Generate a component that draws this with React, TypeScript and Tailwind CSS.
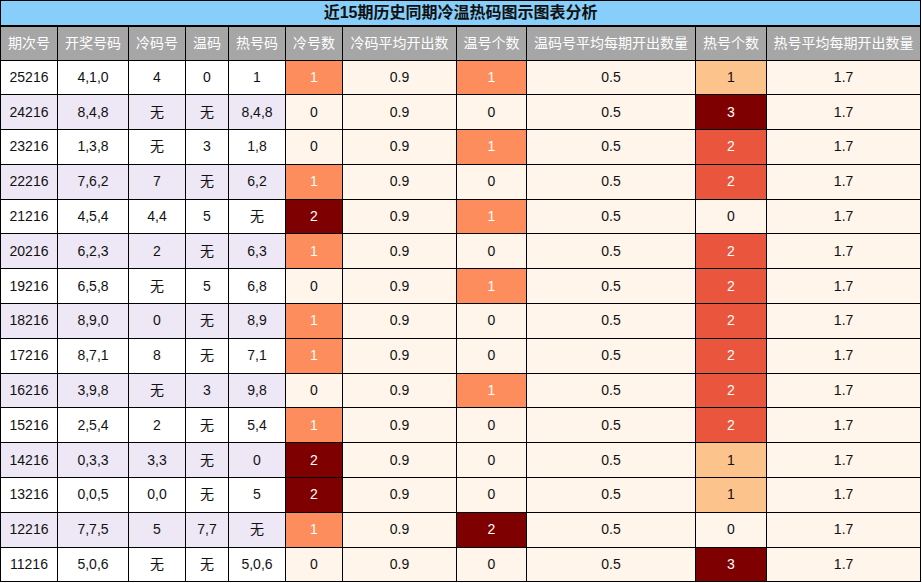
const headers = [
  "期次号",
  "开奖号码",
  "冷码号",
  "温码",
  "热号码",
  "冷号数",
  "冷码平均开出数",
  "温号个数",
  "温码号平均每期开出数量",
  "热号个数",
  "热号平均每期开出数量",
];

const widths = [57, 71, 57, 43, 57, 57, 114, 70, 169, 71, 154];

type Row = [string, string, string, string, string, number, number, number];

const rows: Row[] = [
  ["25216", "4,1,0", "4", "0", "1", 1, 1, 1],
  ["24216", "8,4,8", "无", "无", "8,4,8", 0, 0, 3],
  ["23216", "1,3,8", "无", "3", "1,8", 0, 1, 2],
  ["22216", "7,6,2", "7", "无", "6,2", 1, 0, 2],
  ["21216", "4,5,4", "4,4", "5", "无", 2, 1, 0],
  ["20216", "6,2,3", "2", "无", "6,3", 1, 0, 2],
  ["19216", "6,5,8", "无", "5", "6,8", 0, 1, 2],
  ["18216", "8,9,0", "0", "无", "8,9", 1, 0, 2],
  ["17216", "8,7,1", "8", "无", "7,1", 1, 0, 2],
  ["16216", "3,9,8", "无", "3", "9,8", 0, 1, 2],
  ["15216", "2,5,4", "2", "无", "5,4", 1, 0, 2],
  ["14216", "0,3,3", "3,3", "无", "0", 2, 0, 1],
  ["13216", "0,0,5", "0,0", "无", "5", 2, 0, 1],
  ["12216", "7,7,5", "5", "7,7", "无", 1, 2, 0],
  ["11216", "5,0,6", "无", "无", "5,0,6", 0, 0, 3],
];

// cold / warm counts go up to 2, hot count up to 3
function countCell(v: number, max: number) {
  if (v === 0) return "bg-[#fff5eb] text-[#111]";
  if (v === max) return "bg-[#7f0000] text-white";
  if (max === 3) {
    return v === 1 ? "bg-[#fdc38d] text-[#111]" : "bg-[#e9553d] text-white";
  }
  return "bg-[#fd8d5c] text-white";
}

const cell = "border border-black text-center p-0 whitespace-nowrap";

export default function App() {
  return (
    <div className="w-[922px] h-[583px] overflow-hidden bg-white font-['Liberation_Sans','Noto_Sans_CJK_SC',sans-serif] text-[14px] text-[#111]">
      <table className="table-fixed border-collapse w-[921px]">
        <colgroup>
          {widths.map((w, i) => (
            <col key={i} style={{ width: w }} />
          ))}
        </colgroup>
        <tbody>
          <tr className="h-[25px]">
            <td
              colSpan={11}
              className="border border-black border-b-2 bg-[#87cefa] text-center text-[16px] font-bold p-0"
            >
              近15期历史同期冷温热码图示图表分析
            </td>
          </tr>
          <tr className="h-[34px]">
            {headers.map((h) => (
              <td key={h} className={`${cell} bg-[#a6a6a6] text-white`}>
                {h}
              </td>
            ))}
          </tr>
          {rows.map((r, i) => {
            const stripe = i % 2 === 0 ? "bg-white" : "bg-[#ede7f6]";
            return (
              <tr key={r[0]} className="h-[34.8px]">
                {r.slice(0, 5).map((v, j) => (
                  <td key={j} className={`${cell} ${stripe}`}>
                    {v}
                  </td>
                ))}
                <td className={`${cell} ${countCell(r[5], 2)}`}>{r[5]}</td>
                <td className={`${cell} bg-[#fff5eb]`}>0.9</td>
                <td className={`${cell} ${countCell(r[6], 2)}`}>{r[6]}</td>
                <td className={`${cell} bg-[#fff5eb]`}>0.5</td>
                <td className={`${cell} ${countCell(r[7], 3)}`}>{r[7]}</td>
                <td className={`${cell} bg-[#fff5eb]`}>1.7</td>
              </tr>
            );
          })}
        </tbody>
      </table>
    </div>
  );
}
